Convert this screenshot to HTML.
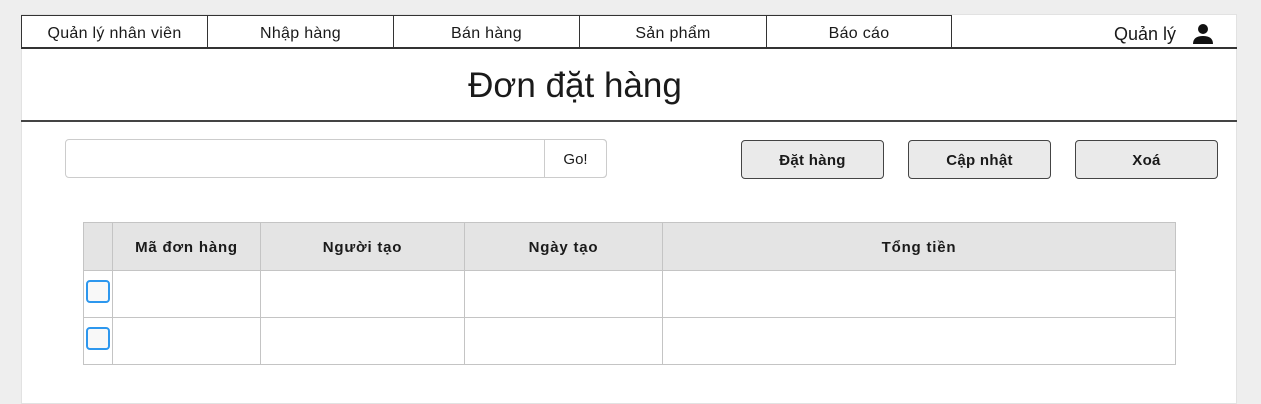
<!DOCTYPE html>
<html><head><meta charset="utf-8"><style>
body{margin:0;width:1261px;height:404px;background:#eeeeee;position:relative;overflow:hidden;font-family:"Liberation Sans",Arial,sans-serif;color:#1a1a1a}
.a{position:absolute;box-sizing:border-box}
.nav{top:15px;height:34px;border:1px solid #333;background:#fff;font-size:16px;text-align:center;line-height:36px;letter-spacing:0.3px}
.btn{top:140px;width:143px;height:39px;border:1px solid #444;border-radius:4px;background:#eaeaea;font-weight:bold;font-size:15px;text-align:center;line-height:40px;letter-spacing:0.3px}
.th{top:222px;height:49px;background:#e4e4e4;border:1px solid #c4c4c4;font-weight:bold;font-size:15px;text-align:center;line-height:49px;letter-spacing:0.8px}
.td{height:48px;border:1px solid #c4c4c4;background:#fff}
.cb{width:24px;height:23px;border:2px solid #2d97ee;border-radius:4px;background:#f8f8f8}
</style></head><body>
<div class="a" style="left:21px;top:14px;width:1216px;height:390px;background:#fff;border:1px solid #e2e2e2"></div>
<div class="a nav" style="left:21px;width:187px">Quản lý nhân viên</div>
<div class="a nav" style="left:207px;width:187px">Nhập hàng</div>
<div class="a nav" style="left:393px;width:187px">Bán hàng</div>
<div class="a nav" style="left:579px;width:188px">Sản phẩm</div>
<div class="a nav" style="left:766px;width:186px">Báo cáo</div>
<div class="a" style="left:21px;top:47px;width:1216px;height:2px;background:#333"></div>
<div class="a" style="left:1114px;top:24px;font-size:18px">Quản lý</div>
<svg class="a" style="left:1191px;top:23px" width="24" height="22" viewBox="0 0 24 22"><circle cx="12" cy="6" r="5" fill="#111"/><path d="M2 21 Q2 13 12 13 Q22 13 22 21 Z" fill="#111"/></svg>
<div class="a" style="left:21px;top:66px;width:1108px;text-align:center;font-size:35px">Đơn đặt hàng</div>
<div class="a" style="left:21px;top:120px;width:1216px;height:2px;background:#444"></div>
<div class="a" style="left:65px;top:139px;width:542px;height:39px;border:1px solid #ccc;border-radius:4px;background:#fff"></div>
<div class="a" style="left:544px;top:139px;width:63px;height:39px;border:1px solid #ccc;border-radius:0 4px 4px 0;text-align:center;line-height:40px;font-size:15px">Go!</div>
<div class="a btn" style="left:741px">Đặt hàng</div>
<div class="a btn" style="left:908px">Cập nhật</div>
<div class="a btn" style="left:1075px">Xoá</div>
<div class="a th" style="left:83px;width:30px"></div>
<div class="a th" style="left:112px;width:149px">Mã đơn hàng</div>
<div class="a th" style="left:260px;width:205px">Người tạo</div>
<div class="a th" style="left:464px;width:199px">Ngày tạo</div>
<div class="a th" style="left:662px;width:514px">Tổng tiền</div>
<div class="a td" style="left:83px;top:270px;width:30px"></div>
<div class="a td" style="left:112px;top:270px;width:149px"></div>
<div class="a td" style="left:260px;top:270px;width:205px"></div>
<div class="a td" style="left:464px;top:270px;width:199px"></div>
<div class="a td" style="left:662px;top:270px;width:514px"></div>
<div class="a td" style="left:83px;top:317px;width:30px"></div>
<div class="a td" style="left:112px;top:317px;width:149px"></div>
<div class="a td" style="left:260px;top:317px;width:205px"></div>
<div class="a td" style="left:464px;top:317px;width:199px"></div>
<div class="a td" style="left:662px;top:317px;width:514px"></div>
<div class="a cb" style="left:86px;top:280px"></div>
<div class="a cb" style="left:86px;top:327px"></div>
</body></html>
